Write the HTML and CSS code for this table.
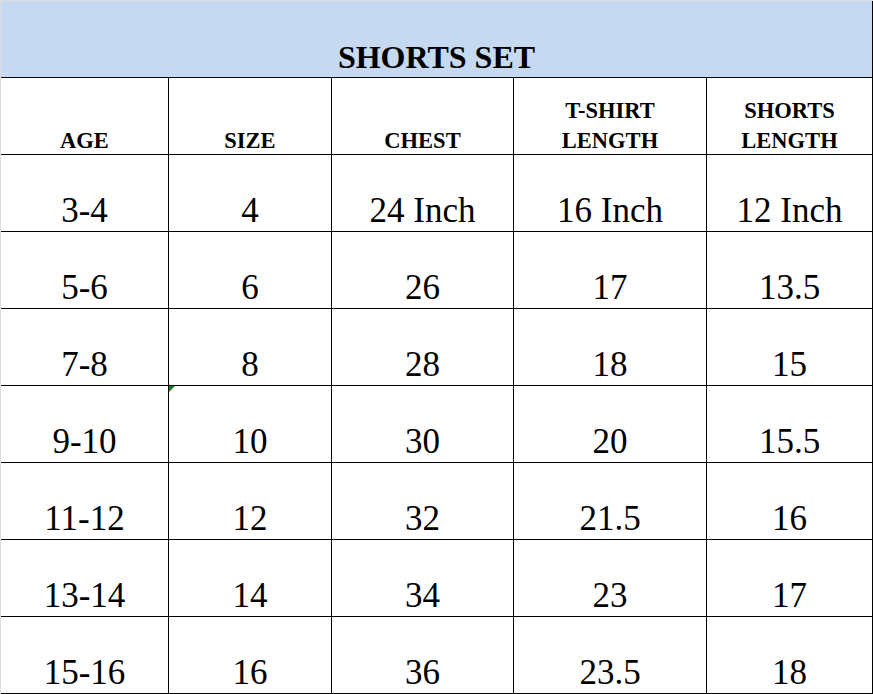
FILE: index.html
```html
<!DOCTYPE html>
<html lang="en">
<head>
<meta charset="utf-8">
<title>Shorts Set Size Chart</title>
<link rel="stylesheet" href="styles.css">
</head>
<body>
<div class="sheet">
  <div class="grid">
    <div class="title"><span>SHORTS SET</span></div>

    <div class="cell hd"><span>AGE</span></div>
    <div class="cell hd"><span>SIZE</span></div>
    <div class="cell hd"><span>CHEST</span></div>
    <div class="cell hd"><span>T-SHIRT<br>LENGTH</span></div>
    <div class="cell hd"><span>SHORTS<br>LENGTH</span></div>

    <div class="cell">3-4</div>
    <div class="cell">4</div>
    <div class="cell">24 Inch</div>
    <div class="cell">16 Inch</div>
    <div class="cell">12 Inch</div>

    <div class="cell">5-6</div>
    <div class="cell">6</div>
    <div class="cell">26</div>
    <div class="cell">17</div>
    <div class="cell">13.5</div>

    <div class="cell">7-8</div>
    <div class="cell">8</div>
    <div class="cell">28</div>
    <div class="cell">18</div>
    <div class="cell">15</div>

    <div class="cell">9-10</div>
    <div class="cell flagged"><i class="tri"></i>10</div>
    <div class="cell">30</div>
    <div class="cell">20</div>
    <div class="cell">15.5</div>

    <div class="cell">11-12</div>
    <div class="cell">12</div>
    <div class="cell">32</div>
    <div class="cell">21.5</div>
    <div class="cell">16</div>

    <div class="cell">13-14</div>
    <div class="cell">14</div>
    <div class="cell">34</div>
    <div class="cell">23</div>
    <div class="cell">17</div>

    <div class="cell">15-16</div>
    <div class="cell">16</div>
    <div class="cell">36</div>
    <div class="cell">23.5</div>
    <div class="cell">18</div>
  </div>
</div>
</body>
</html>
```

FILE: styles.css
```css
html, body {
  margin: 0;
  padding: 0;
  background: #ffffff;
}

body {
  font-family: "Liberation Serif", "Times New Roman", serif;
  color: #000000;
}

.sheet {
  width: 873px;
  height: 694px;
  box-sizing: border-box;
  border-left: 1px solid #dcdcdc;
  border-top: 1px solid #dcdcdc;
  overflow: hidden;
}

.grid {
  display: grid;
  grid-template-columns: 168px 163px 182px 193px 166px;
  grid-auto-rows: 77px;
}

.title {
  grid-column: 1 / -1;
  background: #c5d9f1;
  border-right: 1px solid #000;
  border-bottom: 1px solid #000;
  box-sizing: border-box;
  display: flex;
  align-items: flex-end;
  justify-content: center;
  font-weight: bold;
  font-size: 32px;
  line-height: normal;
}

.title span {
  margin-bottom: 1px;
}

.cell {
  position: relative;
  box-sizing: border-box;
  border-right: 1px solid #000;
  border-bottom: 1px solid #000;
  display: flex;
  align-items: flex-end;
  justify-content: center;
  text-align: center;
  font-size: 35px;
  line-height: normal;
}

.hd {
  font-size: 22.5px;
  font-weight: bold;
  line-height: 30px;
}

.hd span {
  margin-bottom: -2px;
}

.tri {
  position: absolute;
  top: 0;
  left: 0;
  width: 0;
  height: 0;
  border-top: 6px solid #1f7a1f;
  border-right: 6px solid transparent;
}
```
